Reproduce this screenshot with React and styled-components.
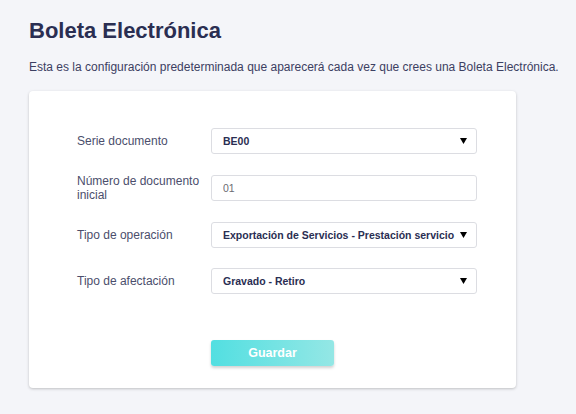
import React from "react";
import styled, { createGlobalStyle } from "styled-components";

const GlobalStyle = createGlobalStyle`
  html, body {
    margin: 0;
    padding: 0;
    background: #f4f5f9;
    font-family: "Liberation Sans", Arial, sans-serif;
  }
`;

const fields = [
  { label: "Serie documento", value: "BE00", kind: "select" },
  { label: "Número de documento inicial", value: "01", kind: "input" },
  {
    label: "Tipo de operación",
    value: "Exportación de Servicios - Prestación servicio",
    kind: "select",
  },
  { label: "Tipo de afectación", value: "Gravado - Retiro", kind: "select" },
];

function App() {
  return (
    <Page>
      <GlobalStyle />
      <Title>Boleta Electrónica</Title>
      <Subtitle>
        Esta es la configuración predeterminada que aparecerá cada vez que
        crees una Boleta Electrónica.
      </Subtitle>
      <Card>
        <Form>
          {fields.map((f) => (
            <Row key={f.label}>
              <Label>{f.label}</Label>
              {f.kind === "select" ? (
                <SelectBox>
                  <SelectValue>{f.value}</SelectValue>
                  <Arrow width="7" height="6" viewBox="0 0 7 6">
                    <polygon points="0,0 7,0 3.5,6" fill="#000" />
                  </Arrow>
                </SelectBox>
              ) : (
                <TextInput defaultValue={f.value} />
              )}
            </Row>
          ))}
          <Actions>
            <SaveButton>Guardar</SaveButton>
          </Actions>
        </Form>
      </Card>
    </Page>
  );
}

const Page = styled.div`
  padding: 17px 0 27px 29px;
  width: 487px;
`;

const Title = styled.h1`
  margin: 0;
  font-size: 22px;
  line-height: 28px;
  font-weight: 700;
  color: #2a2e52;
`;

const Subtitle = styled.p`
  margin: 14px 0 0;
  width: 560px;
  font-size: 12px;
  line-height: 16px;
  color: #3c4062;
  white-space: nowrap;
`;

const Card = styled.div`
  margin-top: 16px;
  background: #fff;
  border-radius: 4px;
  box-shadow: 0 1px 3px rgba(0, 0, 0, 0.22);
  padding: 37px 39px 22px 48px;
`;

const Form = styled.div`
  display: flex;
  flex-direction: column;
  gap: 20px;
`;

const Row = styled.div`
  display: flex;
  align-items: center;
`;

const Label = styled.label`
  flex: 0 0 126px;
  padding-right: 8px;
  font-size: 12px;
  line-height: 14px;
  color: #4b4e6c;
`;

const fieldBox = `
  box-sizing: border-box;
  flex: 1;
  min-width: 0;
  height: 26px;
  border: 1px solid #dcdde2;
  border-radius: 3px;
  background: #fff;
  font-family: "Liberation Sans", Arial, sans-serif;
  font-size: 10.5px;
`;

const SelectBox = styled.div`
  ${fieldBox}
  display: flex;
  align-items: center;
  padding: 0 9px 0 11px;
  gap: 4px;
`;

const SelectValue = styled.span`
  flex: 1;
  min-width: 0;
  overflow: hidden;
  white-space: nowrap;
  font-weight: 700;
  color: #2a2e52;
`;

const Arrow = styled.svg`
  flex: none;
`;

const TextInput = styled.input`
  ${fieldBox}
  padding: 0 11px;
  color: #6b6b72;
  outline: none;
`;

const Actions = styled.div`
  display: flex;
  padding-left: 134px;
  margin-top: 26px;
`;

const SaveButton = styled.button`
  width: 123px;
  height: 26px;
  border: none;
  border-radius: 3px;
  background: linear-gradient(90deg, #52dfe1 0%, #94e7e5 100%);
  box-shadow: 0 2px 3px rgba(0, 0, 0, 0.18);
  color: #fff;
  font-family: "Liberation Sans", Arial, sans-serif;
  font-size: 12.5px;
  font-weight: 700;
  cursor: pointer;
`;

export default App;
